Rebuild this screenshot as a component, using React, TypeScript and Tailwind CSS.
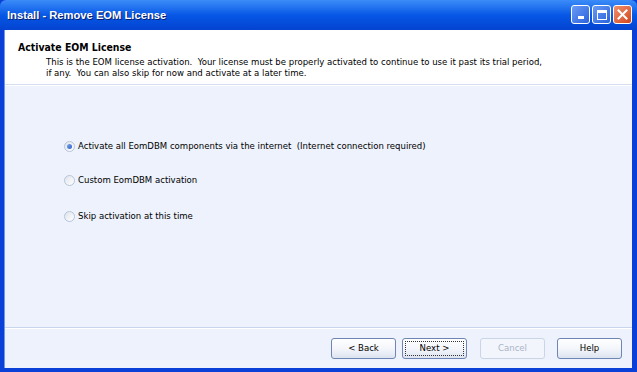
import React from "react";

const font = { fontFamily: '"DejaVu Sans Condensed", "DejaVu Sans", Tahoma, sans-serif' };

function Radio({ checked }: { checked?: boolean }) {
  return (
    <span className="relative inline-flex w-[11px] h-[11px] rounded-full border border-[#b7c4d8] bg-gradient-to-br from-[#dfe4ec] to-[#ffffff] items-center justify-center shrink-0">
      {checked && (
        <span className="w-[5px] h-[5px] rounded-full bg-gradient-to-br from-[#7fa4e8] to-[#2d5ec8]" />
      )}
    </span>
  );
}

function Btn({ children, disabled, focus, className = "" }: { children: React.ReactNode; disabled?: boolean; focus?: boolean; className?: string }) {
  return (
    <div
      className={
        "w-[65px] h-[21px] rounded-[3px] border flex items-center justify-center text-[9.5px] " +
        (disabled
          ? "border-[#cbd5e6] text-[#a9b4c8] bg-[#f2f5fb] "
          : "border-[#6f86b4] text-black bg-gradient-to-b from-[#ffffff] via-[#f4f6fb] to-[#dde4f0] ") +
        className
      }
    >
      {focus ? (
        <span className="border border-dotted border-[#333] h-[15px] w-[59px] flex items-center justify-center">{children}</span>
      ) : (
        children
      )}
    </div>
  );
}

export default function App() {
  return (
    <div className="w-[637px] h-[372px] flex flex-col bg-[#0a3fd8] overflow-hidden" style={font}>
      {/* Title bar */}
      <div className="h-[30px] shrink-0 rounded-t-[6px] bg-gradient-to-b from-[#3b8cf8] via-[#0757e6] to-[#0443d0] flex items-center pl-[7px] pr-[5px]">
        <span
          className="text-white font-bold text-[11.2px] flex-1"
          style={{ fontFamily: '"Liberation Sans", Arial, sans-serif', textShadow: "1px 1px 0 #0a1e6a" }}
        >
          Install - Remove EOM License
        </span>
        <div className="flex gap-[2px] mb-[1px]">
          <div className="w-[19px] h-[19px] rounded-[3px] border border-white bg-gradient-to-br from-[#6a9af5] to-[#2a62dc] flex items-end justify-center pb-[4px]">
            <div className="w-[6px] h-[3px] bg-white" />
          </div>
          <div className="w-[19px] h-[19px] rounded-[3px] border border-white bg-gradient-to-br from-[#6a9af5] to-[#2a62dc] flex items-center justify-center">
            <div className="w-[10px] h-[10px] border border-white border-t-[3px]" />
          </div>
          <div className="w-[19px] h-[19px] rounded-[3px] border border-white bg-gradient-to-br from-[#f0906a] to-[#d24418] flex items-center justify-center">
            <svg width="11" height="11" viewBox="0 0 11 11">
              <path d="M1.5 1.5 L9.5 9.5 M9.5 1.5 L1.5 9.5" stroke="white" strokeWidth="2" strokeLinecap="square" />
            </svg>
          </div>
        </div>
      </div>

      {/* Client area with frame */}
      <div className="flex-1 flex flex-col ml-[4px] mr-[5px] mb-[4px] border-l border-[#6c96ef]">
        {/* Header */}
        <div className="h-[55px] shrink-0 bg-white pt-[11px] pl-[13px] border-b border-[#d3def0]">
          <div className="font-bold text-[10.4px] leading-[13px]">Activate EOM License</div>
          <div className="pl-[28px] mt-[2px] text-[9.5px] leading-[11px] text-black">
            <div>This is the EOM license activation.&nbsp; Your license must be properly activated to continue to use it past its trial period,</div>
            <div>if any.&nbsp; You can also skip for now and activate at a later time.</div>
          </div>
        </div>

        {/* Body */}
        <div className="flex-1 bg-[#edf2fc] flex flex-col pl-[59px] pt-[54px] text-[9.5px] leading-[12px] border-t border-white">
          <div className="flex items-center gap-[3px]">
            <Radio checked />
            <span>Activate all EomDBM components via the internet&nbsp; (Internet connection required)</span>
          </div>
          <div className="flex items-center gap-[3px] mt-[22px]">
            <Radio />
            <span>Custom EomDBM activation</span>
          </div>
          <div className="flex items-center gap-[3px] mt-[24px]">
            <Radio />
            <span>Skip activation at this time</span>
          </div>
        </div>

        {/* Footer */}
        <div className="h-[41px] shrink-0 bg-[#edf2fc] border-t border-[#c8d5ec] flex flex-col">
          <div className="h-px bg-white" />
          <div className="flex items-start pt-[9px] pl-[326px]">
            <Btn>&lt; Back</Btn>
            <Btn focus className="ml-[6px]">Next &gt;</Btn>
            <Btn disabled className="ml-[13px]">Cancel</Btn>
            <Btn className="ml-[12px]">Help</Btn>
          </div>
        </div>
      </div>
    </div>
  );
}
